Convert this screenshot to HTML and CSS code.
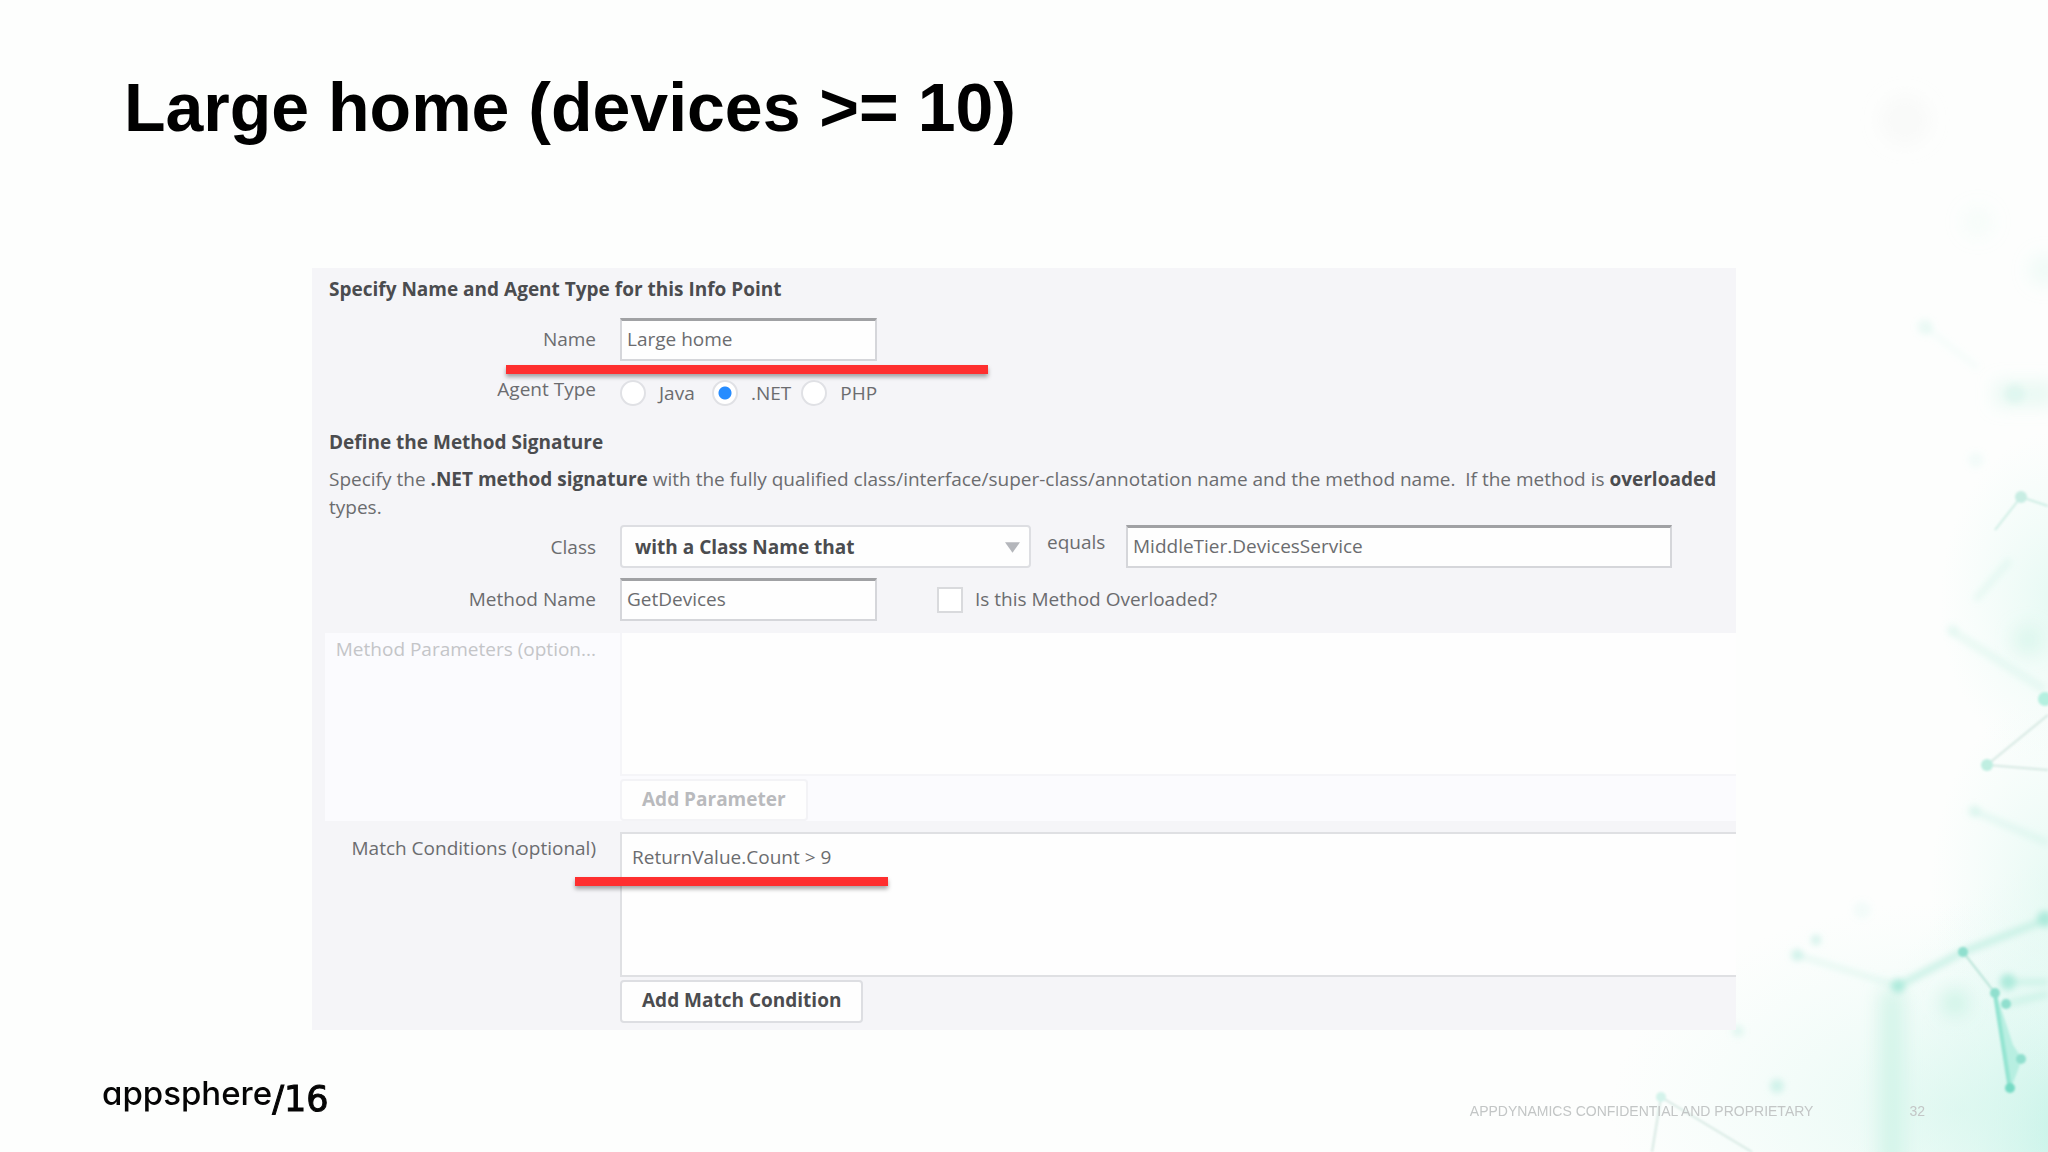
FILE: index.html
```html
<!DOCTYPE html>
<html lang="en">
<head>
<meta charset="utf-8">
<title>Large home (devices &gt;= 10)</title>
<link rel="stylesheet" href="styles.css">
</head>
<body>
<main class="slide">
  <svg class="backdrop" viewBox="0 0 2048 1152" preserveAspectRatio="xMaxYMax slice" aria-hidden="true">
    <defs>
      <radialGradient id="glow"><stop offset="0" stop-color="#8de6d3" stop-opacity=".62"/><stop offset=".45" stop-color="#b5f0e3" stop-opacity=".3"/><stop offset="1" stop-color="#d8f8f0" stop-opacity="0"/></radialGradient>
      <radialGradient id="haze"><stop offset="0" stop-color="#d5f6ec" stop-opacity=".6"/><stop offset="1" stop-color="#e4faf4" stop-opacity="0"/></radialGradient>
      <filter id="soft" x="-50%" y="-50%" width="200%" height="200%"><feGaussianBlur stdDeviation="9"/></filter>
      <filter id="mid" x="-50%" y="-50%" width="200%" height="200%"><feGaussianBlur stdDeviation="3"/></filter>
      <filter id="fine" x="-50%" y="-50%" width="200%" height="200%"><feGaussianBlur stdDeviation="1"/></filter>
    </defs>
    <ellipse cx="2070" cy="1130" rx="220" ry="270" fill="url(#glow)"/>
    <ellipse cx="1960" cy="1110" rx="350" ry="210" fill="url(#haze)"/>
    <ellipse cx="2060" cy="890" rx="130" ry="200" fill="url(#haze)"/>
    <ellipse cx="2060" cy="600" rx="120" ry="170" fill="url(#haze)"/>
    <g filter="url(#soft)" fill="#cdf3e6">
      <circle cx="1978" cy="222" r="16" opacity=".15"/><circle cx="2045" cy="270" r="16" opacity=".25"/>
      <rect x="1995" y="382" width="60" height="24" opacity=".4"/><circle cx="2028" cy="640" r="14" opacity=".6"/>
      <rect x="1880" y="990" width="24" height="180" opacity=".8"/><circle cx="1955" cy="1003" r="13"/>
      <circle cx="1905" cy="120" r="26" fill="#eef1ee" opacity=".25"/>
    </g>
    <g filter="url(#mid)" stroke="#bdeee0" fill="#aeeadb">
      <path d="M1898 986L1963 952L2048 919" fill="none" stroke-width="7" opacity=".75"/>
      <path d="M1797 955L1898 986" stroke-width="4" opacity=".4"/>
      <path d="M1952 631L2045 690" stroke-width="8" opacity=".25"/>
      <path d="M1974 811L2048 843" stroke-width="7" opacity=".3"/>
      <path d="M2006 1004L2048 994M2008 982H2048" stroke-width="6" opacity=".6"/>
      <path d="M1925 327L1978 368" stroke-width="6" opacity=".12"/>
      <path d="M1975 600L2010 560" stroke-width="7" opacity=".25"/>
      <g stroke="none">
        <circle cx="1898" cy="986" r="7"/><circle cx="2045" cy="919" r="8"/><circle cx="2008" cy="982" r="8"/>
        <circle cx="1777" cy="1086" r="7" opacity=".5"/><circle cx="1738" cy="1031" r="6" opacity=".3"/>
        <circle cx="1974" cy="811" r="6" opacity=".3"/><circle cx="1952" cy="630" r="6" opacity=".2"/>
        <circle cx="1925" cy="327" r="8" opacity=".2"/><circle cx="2015" cy="394" r="10" opacity=".2"/>
        <circle cx="1976" cy="460" r="8" opacity=".12"/><circle cx="1862" cy="910" r="9" opacity=".12"/>
        <circle cx="1797" cy="955" r="6" opacity=".5"/><circle cx="1816" cy="940" r="5" opacity=".5"/>
      </g>
    </g>
    <g filter="url(#fine)" fill="#90dfce" stroke="#a9dccf" stroke-width="2">
      <path d="M1963 952L1995 993" opacity=".8"/>
      <path d="M1995 993L2010 1088" stroke="#7cdcc7" stroke-width="4" fill="none"/>
      <path d="M1995 993L2012 1045L2021 1059L2010 1088Z" fill="#a4ead9" stroke="#a4ead9" opacity=".65"/>
      <path d="M2048 715L1987 765L2048 770M1652 1152L1661 1097L1752 1152" fill="none" stroke="#c8dfd9" opacity=".7"/>
      <path d="M1995 530L2021 497L2048 506" fill="none" stroke="#cfeee5"/>
      <g stroke="none">
        <circle cx="1963" cy="952" r="5"/><circle cx="1995" cy="993" r="5"/><circle cx="2006" cy="1004" r="5"/>
        <circle cx="2010" cy="1088" r="5" fill="#76dac4"/><circle cx="2021" cy="1059" r="5"/>
        <circle cx="1987" cy="765" r="6" fill="#bfeee1"/><circle cx="2045" cy="699" r="7" fill="#b5f0e0"/>
        <circle cx="2021" cy="497" r="6" fill="#c8ede3"/><circle cx="1661" cy="1097" r="5" fill="#d4f3eb"/>
      </g>
    </g>
  </svg>

  <h1 class="title">Large home (devices &gt;= 10)</h1>

  <form class="panel">
    <h2 class="heading">Specify Name and Agent Type for this Info Point</h2>
    <div class="row row-name">
      <label class="label" for="name">Name</label>
      <input class="text-box short" id="name" type="text" value="Large home">
      <span class="marker marker-name"></span>
    </div>
    <div class="row row-agent" role="radiogroup" aria-labelledby="agent">
      <span class="label" id="agent">Agent Type</span>
      <div class="options">
        <label class="option"><input class="radio" type="radio" name="agent">Java</label>
        <label class="option"><input class="radio" type="radio" name="agent" checked>.NET</label>
        <label class="option"><input class="radio" type="radio" name="agent">PHP</label>
      </div>
    </div>
    <h2 class="heading heading-method">Define the Method Signature</h2>
    <p class="intro">Specify the <b>.NET method signature</b> with the fully qualified class/interface/super-class/annotation name and the method name.&nbsp; If the method is <b>overloaded</b><br>types.</p>
    <div class="row">
      <label class="label" for="class">Class</label>
      <div class="fields">
        <span class="select-wrap">
          <select class="select" id="class"><option>with a Class Name that</option></select>
          <svg class="arrow" viewBox="0 0 16 11" aria-hidden="true"><path d="M0 0H16L8 11Z" fill="#b4b6bb"/></svg>
        </span>
        <label class="equals" for="class-name">equals</label>
        <input class="text-box long" id="class-name" type="text" value="MiddleTier.DevicesService">
      </div>
    </div>
    <div class="row row-method">
      <label class="label" for="method">Method Name</label>
      <div class="fields">
        <input class="text-box short" id="method" type="text" value="GetDevices">
        <label class="check"><input class="checkbox" type="checkbox">Is this Method Overloaded?</label>
      </div>
    </div>
    <div class="row list-row params">
      <label class="label" for="params">Method Parameters (option...</label>
      <div class="stack">
        <textarea class="list" id="params" disabled></textarea>
        <button class="button" type="button" disabled>Add Parameter</button>
      </div>
    </div>
    <div class="row list-row match">
      <label class="label" for="conditions">Match Conditions (optional)</label>
      <div class="stack">
        <textarea class="list" id="conditions">ReturnValue.Count &gt; 9</textarea>
        <button class="button" type="button">Add Match Condition</button>
      </div>
      <span class="marker marker-match"></span>
    </div>
  </form>

  <footer class="footer">
    <div class="logo"><span>appsphere</span><span class="year">/16</span></div>
    <div class="legal"><span>APPDYNAMICS CONFIDENTIAL AND PROPRIETARY</span><span>32</span></div>
  </footer>
</main>
</body>
</html>
```
FILE: styles.css
```css
* { box-sizing: border-box; }
body { margin: 0; background: #fdfefd; font-family: "Open Sans", "Noto Sans", sans-serif; }

.slide {
  position: relative;
  display: flex;
  flex-direction: column;
  min-height: 100vh;
  overflow: hidden;
}
.backdrop { position: absolute; inset: 0; width: 100%; height: 100%; }
.title, .panel, .footer { position: relative; }

.title {
  margin: 67px 124px 0;
  font: bold 68px/80px "Liberation Sans", Arial, sans-serif;
  color: #000;
}

.panel {
  margin: 121px 312px 0;
  padding: 7px 0;
  background: #f5f5f8;
  color: #6b6c6f;
  font-size: 19px;
  line-height: 28px;
}
.heading { margin: 0 17px; font-size: 19px; line-height: 28px; color: #4b4c4f; }
.heading-method { margin-top: 22px; }
.intro { margin: 9px 0 2px 17px; line-height: 28px; padding-bottom: 2px; white-space: nowrap; }
.intro b { color: #4b4c4f; }

.row {
  position: relative;
  display: grid;
  grid-template-columns: 284px minmax(0, 1fr);
  column-gap: 24px;
  align-items: center;
}
.label { text-align: right; white-space: nowrap; }
.row-name { margin-top: 15px; }
.row-name .label { line-height: 42px; align-self: start; }
.row-agent { margin-top: 19px; align-items: start; }
.row-agent .label { line-height: 18px; }
.row-method { margin-top: 10px; }
.row-method .label, .check { line-height: 42px; align-self: start; }

.fields, .options, .option, .check { display: flex; }
.options { gap: 10px; }
.option { align-items: center; gap: 13px; line-height: 24px; }
.option:first-child { min-width: 82px; }
.radio, .checkbox {
  appearance: none;
  flex: none;
  width: 26px;
  height: 26px;
  margin: 0;
  border: 2px solid #e0e1e5;
  background: #fff;
}
.radio { border-radius: 50%; }
.radio:checked { background: radial-gradient(circle, #268cff 0 6px, #fff 7px); }
.check { margin-left: 60px; gap: 12px; }
.checkbox { margin-top: 9px; border-color: #d9dadd; }

.text-box, .select, .button, .list { font: inherit; color: inherit; background-color: #fefefe; }
.text-box {
  height: 43px;
  padding: 0 5px 3px;
  border: 2px solid #d5d6da;
  border-top: 3px solid #a0a1a4;
}
.short { width: 257px; }
.long { width: 546px; }
.select-wrap { position: relative; width: 411px; }
.select {
  appearance: none;
  width: 100%;
  height: 43px;
  padding: 0 13px;
  border: 2px solid #dddee2;
  border-radius: 4px;
  font-weight: bold;
  color: #4b4c4f;
}
.arrow { position: absolute; right: 11px; top: 17px; width: 15px; height: 11px; }
.equals { width: 95px; padding-left: 16px; line-height: 34px; }

.list-row { align-items: start; }
.list-row .label { line-height: 32px; }
.stack { display: flex; flex-direction: column; align-items: flex-start; }
.list {
  display: block;
  width: 100%;
  height: 145px;
  padding: 9px 10px;
  border: 2px solid #dfe0e3;
  border-right: 0;
  resize: none;
}
.button {
  height: 43px;
  margin-top: 3px;
  padding: 0 20px 3px;
  border: 2px solid #dddee2;
  border-radius: 4px;
  font-weight: bold;
  color: #4b4c4f;
}
.params {
  margin: 12px 0 11px 13px;
  grid-template-columns: 271px minmax(0, 1fr);
  background: #fbfbfe;
  color: #c4c5c8;
}
.params .list { height: 143px; border-color: #f5f5f8; border-top: 0; }
.params .button { height: 42px; border-color: #f3f3f6; color: #b9babd; }

.marker { position: absolute; height: 9px; background: #fe2f2f; box-shadow: 0 3px 4px rgba(0, 0, 0, .35); }
.marker-name { left: 194px; top: 47px; width: 482px; }
.marker-match { left: 263px; top: 45px; width: 313px; }

.footer {
  display: flex;
  justify-content: space-between;
  margin-top: auto;
  padding: 0 123px 31px 102px;
}
.logo {
  display: flex;
  padding-bottom: 2px;
  font: 500 33px/40px Inter, Lato, sans-serif;
  font-feature-settings: "cv11";
  color: #050505;
}
.year { padding-top: 6px; font: 35px/40px "DejaVu Sans", sans-serif; -webkit-text-stroke: 1px #050505; }
.legal {
  display: flex;
  gap: 96px;
  align-items: flex-end;
  font: 14px/20px "Liberation Sans", Arial, sans-serif;
  color: #c3c6c6;
}
```
